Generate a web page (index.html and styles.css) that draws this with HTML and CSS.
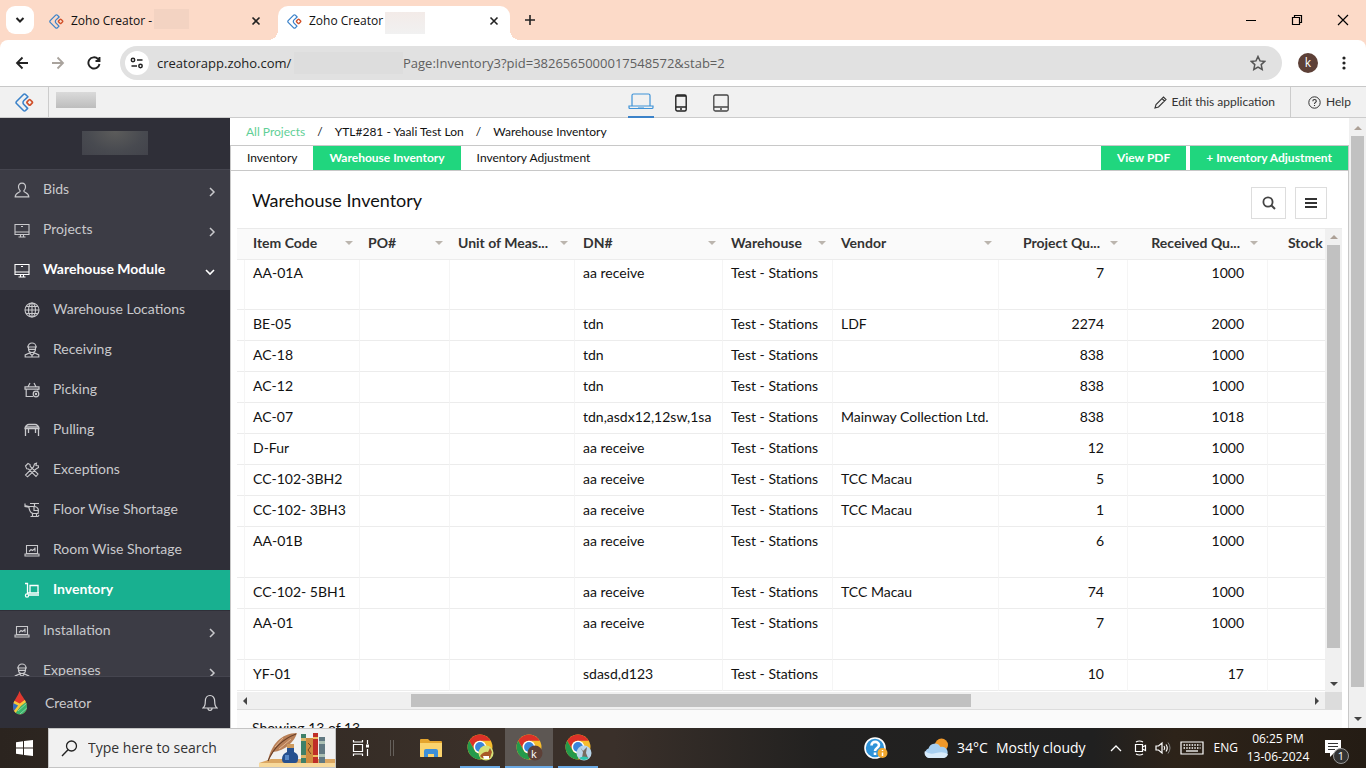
FILE: index.html
```html
<!DOCTYPE html>
<html lang="en">
<head>
<meta charset="utf-8">
<title>Zoho Creator</title>
<link rel="stylesheet" href="styles.css">
</head>
<body>
<svg class="defs" aria-hidden="true">
  <symbol id="zoho" viewBox="0 0 18 18">
    <path d="M12.2 3.6 10 1.4a1.4 1.4 0 0 0-2 0L1.4 8a1.4 1.4 0 0 0 0 2L8 16.600a1.400 1.400 0 0 0 2 0l2-2-3.600-3.700a2.600 2.600 0 0 1 0-3.800z" fill="none" stroke="#3b82c9" stroke-width="1.500" stroke-linejoin="round"/>
    <rect x="11.800" y="6.800" width="4.200" height="4.200" rx="1" transform="rotate(45 13.900 8.900)" fill="none" stroke="#d1512b" stroke-width="1.600"/>
  </symbol>
  <symbol id="close" viewBox="0 0 10 10"><path d="m1.500 1.500 7 7m0-7-7 7" stroke="#222" stroke-width="1.600"/></symbol>
  <symbol id="right" viewBox="0 0 8 10"><path d="m2 1 4 4-4 4" fill="none" stroke="currentColor" stroke-width="1.500"/></symbol>
  <symbol id="monitor" viewBox="0 0 16 16"><path d="M1 2.500h14v10H1zM1 10h14M7 4.500h2M6.500 12.500v2.500m3-2.500v2.500M4.500 15h7" fill="none" stroke="currentColor" stroke-width="1.100"/></symbol>
  <symbol id="laptop" viewBox="0 0 16 16"><path d="M2.500 3.500h11v8h-11zM1 12h14v2H1zM5 9.500l2-2 1.500 1L11 6.500M11 5.500v4" fill="none" stroke="currentColor" stroke-width="1.100"/></symbol>
  <symbol id="worker" viewBox="0 0 16 16"><path d="M4 5a4 4 0 0 1 8 0M3 5h10M4.500 5v2a3.500 3.500 0 0 0 7 0V5M5 7.300h6M1.200 15v-2L5.500 11 8 13.500 10.500 11l4.300 2v2zM8 13v2M6 9.500v2m4-2v2" fill="none" stroke="currentColor" stroke-width="1.200"/></symbol>
  <symbol id="chrome" viewBox="0 0 26 26">
    <circle cx="13" cy="13" r="12.500" fill="#f7bd2d"/>
    <path d="M2.200 6.700A12.500 12.500 0 0 1 23.800 6.700H13a6.300 6.300 0 0 0-5.500 9.500z" fill="#dc3127"/>
    <path d="M2.200 6.700A12.500 12.500 0 0 0 12.800 25.500l5.400-9.300a6 6 0 0 1-10.700 0z" fill="#249a4b"/>
    <circle cx="13" cy="13" r="6.300" fill="#fff"/><circle cx="13" cy="13" r="4.900" fill="#3a85db"/>
  </symbol>
</svg>

<header class="browser">
  <div class="tabstrip">
    <button class="tab-search" aria-label="Search tabs"><svg width="10" height="8" viewBox="0 0 10 8"><path d="m1.500 2 3.500 3.500L8.500 2" fill="none" stroke="#222" stroke-width="2"/></svg></button>
    <div class="tab">
      <svg class="fav"><use href="#zoho"/></svg><span>Zoho Creator -</span><i class="patch peach"></i>
      <button class="tab-close" aria-label="Close tab"><svg width="10" height="10"><use href="#close"/></svg></button>
    </div>
    <div class="tab active">
      <svg class="fav"><use href="#zoho"/></svg><span>Zoho Creator</span><i class="patch pale"></i>
      <button class="tab-close" aria-label="Close tab"><svg width="10" height="10"><use href="#close"/></svg></button>
    </div>
    <button class="new-tab" aria-label="New tab"><svg width="12" height="12" viewBox="0 0 12 12"><path d="M6 1v10M1 6h10" stroke="#222" stroke-width="1.600"/></svg></button>
    <div class="win">
      <button aria-label="Minimize"><svg width="12" height="12" viewBox="0 0 12 12"><path d="M1 6.500h10" stroke="#000"/></svg></button>
      <button aria-label="Restore"><svg width="12" height="12" viewBox="0 0 12 12"><path d="M1.500 3.500h7v7h-7zM3.500 3V1.500h7v7H9" fill="none" stroke="#000" stroke-width="1.200"/></svg></button>
      <button aria-label="Close"><svg width="12" height="12" viewBox="0 0 12 12"><path d="m1 1 10 10M11 1 1 11" stroke="#000" stroke-width="1.200"/></svg></button>
    </div>
  </div>
  <div class="toolbar">
    <button aria-label="Back"><svg width="14" height="14" viewBox="0 0 14 14"><path d="M13 7H2m5.500-5.500L2 7l5.500 5.500" fill="none" stroke="#222" stroke-width="1.800"/></svg></button>
    <button aria-label="Forward"><svg width="14" height="14" viewBox="0 0 14 14"><path d="M1 7h11M6.500 1.500 12 7l-5.500 5.500" fill="none" stroke="#a9a39d" stroke-width="1.800"/></svg></button>
    <button aria-label="Reload"><svg width="14" height="14" viewBox="0 0 14 14"><path d="M12.500 8A5.600 5.600 0 1 1 11 3l1 1M12.500 1v4h-4" fill="none" stroke="#222" stroke-width="1.900"/></svg></button>
    <div class="omnibox">
      <button class="site" aria-label="Site information"><svg width="14" height="12" viewBox="0 0 14 12"><path d="M7 3h5.500M1.500 9H7" stroke="#222" stroke-width="1.600"/><circle cx="3" cy="3" r="1.700" fill="none" stroke="#222" stroke-width="1.500"/><circle cx="10.500" cy="9" r="1.700" fill="none" stroke="#222" stroke-width="1.500"/></svg></button>
      <input class="host" aria-label="Address host" value="creatorapp.zoho.com/"><i class="patch url"></i><input class="path" aria-label="Address path" value="Page:Inventory3?pid=3826565000017548572&amp;stab=2">
      <button class="star" aria-label="Bookmark"><svg width="16" height="16" viewBox="0 0 16 16"><path d="m8 1.500 2 4.400 4.800.5-3.600 3.200 1 4.800L8 12l-4.200 2.400 1-4.800L1.200 6.400 6 5.900z" fill="none" stroke="#555" stroke-width="1.500"/></svg></button>
    </div>
    <button class="avatar">k</button>
    <button class="dots" aria-label="Menu"><svg width="4" height="14" viewBox="0 0 4 14" fill="#222"><circle cx="2" cy="2" r="1.600"/><circle cx="2" cy="7" r="1.600"/><circle cx="2" cy="12" r="1.600"/></svg></button>
  </div>
</header>

<div class="appbar">
  <a class="applogo" href="#" aria-label="Creator home"><svg width="19" height="19"><use href="#zoho"/></svg></a>
  <i class="patch appname"></i>
  <div class="devices">
    <button class="device on" aria-label="Desktop"><svg width="26" height="17" viewBox="0 0 26 17"><path d="M4 13V2.500Q4 1 5.500 1h15Q22 1 22 2.500V13M1 13h24v1.500q0 1-1 1H2q-1 0-1-1zM10 15h6" fill="none" stroke="#3f93d8" stroke-width="1.200"/></svg></button>
    <button class="device" aria-label="Phone"><svg width="12" height="18" viewBox="0 0 12 18"><rect x=".8" y="1" width="10.400" height="16" rx="1.500" fill="none" stroke="#222" stroke-width="1.400"/><path d="M1 2h10M1 13h10M5 15h2" stroke="#222" stroke-width="1.300"/></svg></button>
    <button class="device" aria-label="Tablet"><svg width="16" height="18" viewBox="0 0 16 18"><rect x=".8" y="1" width="14.400" height="16" rx="1.500" fill="none" stroke="#444" stroke-width="1.300"/><path d="M1 13h14M7 15h2" stroke="#444" stroke-width="1.300"/></svg></button>
  </div>
  <button class="edit"><svg width="13" height="13" viewBox="0 0 13 13"><path d="m1 12 1-3.500L9.500 1 12 3.500 4.500 11zM8 2.500 10.500 5" fill="none" stroke="#333" stroke-width="1.100"/></svg>Edit this application</button>
  <button class="help"><svg width="13" height="13" viewBox="0 0 13 13"><circle cx="6.500" cy="6.500" r="5.700" fill="none" stroke="#333"/><path d="M4.800 5.200c0-2.200 3.500-2.200 3.500 0 0 1.200-1.800 1.300-1.800 2.800m0 1v1" fill="none" stroke="#333" stroke-width="1.100"/></svg>Help</button>
</div>

<div class="app">
  <aside class="side">
    <div class="side-head"><i class="patch brand"></i></div>
    <nav class="nav">
      <a class="item" href="#"><svg class="ic" viewBox="0 0 16 16"><path d="M8 1.200c-2.500 0-3.700 1.800-3.500 4 .1 1.600.8 2.700 1.700 3.600C6.500 10.500 1.200 11 1.200 14.800h13.600c0-3.800-5.300-4.300-5-6 .9-.9 1.600-2 1.700-3.600.2-2.200-1-4-3.500-4z" fill="none" stroke="currentColor" stroke-width="1.200"/></svg>Bids<svg class="chev"><use href="#right"/></svg></a>
      <a class="item" href="#"><svg class="ic"><use href="#monitor"/></svg>Projects<svg class="chev"><use href="#right"/></svg></a>
      <a class="item open" href="#"><svg class="ic"><use href="#monitor"/></svg>Warehouse Module<svg class="down" viewBox="0 0 10 8"><path d="m1 2 4 4 4-4" fill="none" stroke="currentColor" stroke-width="1.600"/></svg></a>
      <div class="sub">
        <a class="item" href="#"><svg class="ic" viewBox="0 0 16 16"><g fill="none" stroke="currentColor" stroke-width="1.100"><circle cx="8" cy="8" r="7"/><ellipse cx="8" cy="8" rx="3.500" ry="7"/><path d="M8 1v14M1 8h14M2.200 4.500h11.600M2.200 11.500h11.600"/></g></svg>Warehouse Locations</a>
        <a class="item" href="#"><svg class="ic"><use href="#worker"/></svg>Receiving</a>
        <a class="item" href="#"><svg class="ic" viewBox="0 0 16 16"><g fill="none" stroke="currentColor" stroke-width="1.200"><path d="M1 4.800h14v2.400H1zM2.200 7.200v7.300h7M13.800 7.200v1.300M4 4.800 6 1m6 3.800L10 1"/><circle cx="12" cy="12" r="2.800"/><circle cx="12" cy="12" r=".6"/></g></svg>Picking</a>
        <a class="item" href="#"><svg class="ic" viewBox="0 0 16 16"><path d="M1 6.500c0-2 2-4 4-4h6c2 0 4 2 4 4zM1 4.800h14M1.500 6.500V14M14.500 6.500V14M4.500 6.500V11M11.500 6.500V11" fill="none" stroke="currentColor" stroke-width="1.300"/></svg>Pulling</a>
        <a class="item" href="#"><svg class="ic" viewBox="0 0 16 16"><g fill="none" stroke="currentColor" stroke-width="1.100"><path d="M1.500 4 4 1.500l2 1 .3 2 7.700 7.500-2 2.500L4.500 7l-1.800-.2zM14.500 5.500 12 7l-8.500 7.800L1.500 13 9.500 5 10.500 2l2-.8-.5 2.300 2.300.3z"/></g></svg>Exceptions</a>
        <a class="item" href="#"><svg class="ic" viewBox="0 0 16 16"><path d="M1 1.500v3l4 .7c.3 4 2 6 4.500 6.300h4.500q1.500-6-3-7H5L1 3.500M6 1.500h9M10.500 1.500V4M10 5v3.500h4.500M8.500 11.500v2.500m4-2.500v2.500M6.500 14.500H14l1-1.500" fill="none" stroke="currentColor" stroke-width="1.200"/></svg>Floor Wise Shortage</a>
        <a class="item" href="#"><svg class="ic"><use href="#laptop"/></svg>Room Wise Shortage</a>
        <a class="item current" href="#"><svg class="ic" viewBox="0 0 16 16"><path d="M1 1.500h2.500V12M6 3.500h8v7.500H6zM5 13h10M4 11h11" fill="none" stroke="currentColor" stroke-width="1.300"/><circle cx="3" cy="13.500" r="1.600" fill="none" stroke="currentColor" stroke-width="1.200"/></svg>Inventory</a>
      </div>
      <a class="item" href="#"><svg class="ic"><use href="#laptop"/></svg>Installation<svg class="chev"><use href="#right"/></svg></a>
      <a class="item" href="#"><svg class="ic"><use href="#worker"/></svg>Expenses<svg class="chev"><use href="#right"/></svg></a>
    </nav>
    <div class="side-foot">
      <svg width="16" height="24" viewBox="0 0 16 24"><defs><clipPath id="drop"><path d="M7.500 0C9.500 6 15 9 15 16a7 7.500 0 0 1-14 0C1 9 6 6 7.500 0z"/></clipPath></defs><g clip-path="url(#drop)"><path d="M0 0h16v24H0z" fill="#e0392f"/><path d="M0 9l8 5-8 8z" fill="#2f6fc0"/><path d="M16 9v15H0v-2z" fill="#39b36b"/><path d="m0 10 8 4 8-6M8 14l-6 8" fill="none" stroke="#f7c93b" stroke-width="2.500"/><path d="m6 20 9-8M8 23l8-7" stroke="#9be0b0" stroke-width=".8"/></g></svg>
      <span>Creator</span>
      <button class="bell" aria-label="Notifications"><svg width="16" height="18" viewBox="0 0 16 18"><path d="M1 14c2-1.500 2.300-3 2.300-6.500C3.300 4 5 1.500 8 1.500S12.700 4 12.700 7.500C12.700 11 13 12.500 15 14zM6 14.500c0 2.500 4 2.500 4 0" fill="none" stroke="#d5d5d8" stroke-width="1.200"/></svg></button>
    </div>
  </aside>

  <main class="page">
    <nav class="crumbs"><a href="#">All Projects</a><i>/</i><span>YTL#281 - Yaali Test Lon</span><i>/</i><span>Warehouse Inventory</span></nav>
    <div class="panel">
      <div class="tabs">
        <button>Inventory</button><button class="sel">Warehouse Inventory</button><button>Inventory Adjustment</button>
        <div class="actions"><button class="sel">View PDF</button><button class="sel">+ Inventory Adjustment</button></div>
      </div>
      <section class="report">
        <div class="report-head">
          <h1>Warehouse Inventory</h1>
          <button class="search-btn" aria-label="Search"><svg width="14" height="14" viewBox="0 0 14 14"><circle cx="6" cy="6" r="4.600" fill="none" stroke="#444" stroke-width="1.800"/><path d="m9 9 4 4" stroke="#444" stroke-width="2"/></svg></button>
          <button aria-label="Options"><svg width="12" height="12" viewBox="0 0 12 12"><path d="M0 2h12M0 6h12M0 10h12" stroke="#333" stroke-width="2"/></svg></button>
        </div>
        <div class="grid">
          <div class="scroll">
            <table>
              <colgroup><col class="c0"><col class="c1"><col class="c2"><col class="c3"><col class="c4"><col class="c5"><col class="c6"><col class="c7"><col class="c8"><col class="c9"></colgroup>
              <thead><tr><th></th><th><div>Item Code</div></th><th><div>PO#</div></th><th><div>Unit of Meas...</div></th><th><div>DN#</div></th><th><div>Warehouse</div></th><th><div>Vendor</div></th><th class="n"><div>Project Qu...</div></th><th class="n"><div>Received Qu...</div></th><th class="stock">Stock</th></tr></thead>
              <tbody>
                <tr class="tall"><td></td><td>AA-01A</td><td></td><td></td><td>aa receive</td><td>Test - Stations</td><td></td><td class="n">7</td><td class="n">1000</td><td></td></tr>
                <tr><td></td><td>BE-05</td><td></td><td></td><td>tdn</td><td>Test - Stations</td><td>LDF</td><td class="n">2274</td><td class="n">2000</td><td></td></tr>
                <tr><td></td><td>AC-18</td><td></td><td></td><td>tdn</td><td>Test - Stations</td><td></td><td class="n">838</td><td class="n">1000</td><td></td></tr>
                <tr><td></td><td>AC-12</td><td></td><td></td><td>tdn</td><td>Test - Stations</td><td></td><td class="n">838</td><td class="n">1000</td><td></td></tr>
                <tr><td></td><td>AC-07</td><td></td><td></td><td>tdn,asdx12,12sw,1sa</td><td>Test - Stations</td><td>Mainway Collection Ltd.</td><td class="n">838</td><td class="n">1018</td><td></td></tr>
                <tr><td></td><td>D-Fur</td><td></td><td></td><td>aa receive</td><td>Test - Stations</td><td></td><td class="n">12</td><td class="n">1000</td><td></td></tr>
                <tr><td></td><td>CC-102-3BH2</td><td></td><td></td><td>aa receive</td><td>Test - Stations</td><td>TCC Macau</td><td class="n">5</td><td class="n">1000</td><td></td></tr>
                <tr><td></td><td>CC-102- 3BH3</td><td></td><td></td><td>aa receive</td><td>Test - Stations</td><td>TCC Macau</td><td class="n">1</td><td class="n">1000</td><td></td></tr>
                <tr class="tall"><td></td><td>AA-01B</td><td></td><td></td><td>aa receive</td><td>Test - Stations</td><td></td><td class="n">6</td><td class="n">1000</td><td></td></tr>
                <tr><td></td><td>CC-102- 5BH1</td><td></td><td></td><td>aa receive</td><td>Test - Stations</td><td>TCC Macau</td><td class="n">74</td><td class="n">1000</td><td></td></tr>
                <tr class="tall"><td></td><td>AA-01</td><td></td><td></td><td>aa receive</td><td>Test - Stations</td><td></td><td class="n">7</td><td class="n">1000</td><td></td></tr>
                <tr><td></td><td>YF-01</td><td></td><td></td><td>sdasd,d123</td><td>Test - Stations</td><td></td><td class="n">10</td><td class="n">17</td><td></td></tr>
              </tbody>
            </table>
          </div>
          <div class="vbar"><i class="up"></i><i class="thumb"></i><i class="dn"></i></div>
          <div class="hbar"><i class="lf"></i><i class="track"><i class="thumb"></i></i><i class="rt"></i></div>
          <div class="corner"></div>
        </div>
        <div class="report-foot">Showing 13 of 13</div>
      </section>
    </div>
  </main>
  <div class="vbar page-bar"><i class="up"></i><i class="thumb"></i><i class="dn"></i></div>
</div>

<footer class="taskbar">
  <button class="start" aria-label="Start"><svg width="17" height="16" viewBox="0 0 17 16" fill="#fff"><path d="M0 2.300 7 1.300v6.300H0zM8 1.100 17 0v7.600H8zM0 8.500h7v6.300l-7-1zM8 8.500h9V16l-9-1.100z"/></svg></button>
  <div class="find">
    <svg width="17" height="17" viewBox="0 0 17 17"><circle cx="10.500" cy="6" r="5" fill="none" stroke="#222" stroke-width="1.300"/><path d="M7 9.700 1 16" stroke="#222" stroke-width="1.400"/></svg>
    <input placeholder="Type here to search" aria-label="Type here to search">
    <svg class="art" width="76" height="38" viewBox="0 0 76 38">
      <path d="M0 34l12-4h64v8H0z" fill="#dba763"/><path d="M0 34h76v4H0z" fill="#f7d99b"/>
      <path d="M9 32C12 16 22 4 38 4c-2 8-12 18-24 19" fill="#b98058"/><path d="M9 32C14 20 24 10 37 5" fill="none" stroke="#6b4029" stroke-width="1.200"/><path d="m16 18 8-9m-4 11 12-10" stroke="#e2b48f" stroke-width="1"/>
      <path d="M28 17h7v6q5 2 4 7 0 4-3 4h-10q-3 0-3-4 0-5 5-7z" fill="#26508f"/><path d="M28 15h7v4h-7z" fill="#cf9a5c"/><path d="M26 26h4v5h-4z" fill="#5687c7"/>
      <path d="M42 5h5v29h-5z" fill="#3f8068"/><path d="M42 9h5v3h-5zm0 17h5v3h-5z" fill="#d9b569"/><path d="M47 9h7v25h-7z" fill="#d08b3f"/><path d="m49 14 3 3-3 4 3 4" fill="none" stroke="#7c451e"/><path d="M54 4h5v30h-5z" fill="#bf2e27"/><path d="M54 8h5v2h-5zm0 18h5v2h-5z" fill="#efbc62"/><path d="M60 8h6v26h-6z" fill="#617982"/><path d="M60 12h6v3h-6zm0 13h6v3h-6z" fill="#abc0b4"/>
    </svg>
  </div>
  <button class="tb view" aria-label="Task view"><svg width="17" height="16" viewBox="0 0 17 16"><path d="M1.500 4.500h9v7h-9zM1.500 0v2h9V0M1.500 16v-2h9v2M15.500 0v4M15.500 9v7" fill="none" stroke="#fff" stroke-width="1.200"/><path d="M14 4.500h3v3h-3z" fill="#fff"/></svg></button>
  <i class="sep"></i>
  <button class="tb files" aria-label="Files"><svg width="22" height="19" viewBox="0 0 22 19"><path d="M0 1q0-1 1-1h7l2 2h11q1 0 1 1v15H0z" fill="#e5a52e"/><path d="M0 4h22v13q0 1-1 1H1q-1 0-1-1z" fill="#fbd46e"/><path d="M4 18v-6q0-2 2-2h10q2 0 2 2v6h-4v-3H8v3z" fill="#3d8fd8"/></svg></button>
  <button class="tb run" aria-label="Chrome, first profile"><svg width="28" height="28" viewBox="0 0 28 28"><use href="#chrome" width="26" height="26"/><circle cx="19" cy="19" r="7.500" fill="#d6e178"/><path d="M13 22q4-5 8-4l2-4 2 4-2 6h-8z" fill="#a85a28"/><path d="M16 22h6v3h-5z" fill="#fff"/></svg></button>
  <button class="tb run focus" aria-label="Chrome, profile k"><svg width="28" height="28" viewBox="0 0 28 28"><use href="#chrome" width="26" height="26"/><circle cx="19" cy="19" r="7.500" fill="#5d4037"/></svg><span class="k">k</span></button>
  <button class="tb run" aria-label="Chrome, third profile"><svg width="28" height="28" viewBox="0 0 28 28"><use href="#chrome" width="26" height="26"/><circle cx="19" cy="19" r="7.500" fill="#b9d5ea"/><path d="m15 13 3 4 4-4-1 6 2 5h-6l1-6z" fill="#776b60"/><path d="M14 24q5-3 10 0-5 4-10 0z" fill="#2cc6ae"/></svg></button>
  <div class="tray">
    <button class="tip" aria-label="Tips"><svg width="24" height="22" viewBox="0 0 24 22"><circle cx="11" cy="11" r="10" fill="#2f93d8" stroke="#fff" stroke-width="1.600"/><path d="M7.500 8.500c0-5 7.500-4.500 7.500-.5 0 3-4 3-4 6m0 1.500V18" fill="none" stroke="#fff" stroke-width="2.600"/><circle cx="18.500" cy="16" r="5" fill="#f3a92f"/><path d="M18.500 13v1m0 1.500V19" stroke="#fff" stroke-width="1.500"/></svg></button>
    <button class="weather"><svg width="25" height="21" viewBox="0 0 25 21"><circle cx="17.500" cy="7" r="6.500" fill="#f0992a"/><path d="M5 20a5 5 0 0 1-.5-9.500A6.500 6.500 0 0 1 16.500 9a5.600 5.600 0 1 1 3 11z" fill="#a7cff1"/><path d="M5 20a5 5 0 0 1-4-7q4 4 11 2t12 1q-1 4-5 4z" fill="#d8ebfb"/></svg><span>34°C</span><span>Mostly cloudy</span></button>
    <button class="up-tray" aria-label="Hidden icons"><svg width="12" height="8" viewBox="0 0 12 8"><path d="m1 7 5-5 5 5" fill="none" stroke="#fff" stroke-width="1.300"/></svg></button>
    <button class="meet" aria-label="Meet now"><svg width="13" height="16" viewBox="0 0 13 16"><path d="M1.500 4.500h7v7h-7zM8.500 7l3-1.500v5L8.500 9M2 2q3.500-2 7 0M2 14q3.500 2 7 0" fill="none" stroke="#fff" stroke-width="1.200"/></svg></button>
    <button class="volume" aria-label="Volume"><svg width="17" height="14" viewBox="0 0 17 14"><path d="M1 5h2.500L7 2v10L3.500 9H1zM9 5q1.500 2 0 4M11 3.500q2.500 3.500 0 7" fill="none" stroke="#fff" stroke-width="1.200"/><path d="M13 1.500q4 5.500 0 11" fill="none" stroke="#888"/></svg></button>
    <button aria-label="Keyboard"><svg width="24" height="14" viewBox="0 0 24 14"><path d="M1 1h22v12H1z" fill="none" stroke="#fff" stroke-width="1.200"/><path d="M3.500 4h17M3.500 7h17" stroke="#fff" stroke-width="1.300" stroke-dasharray="1.500 1.200"/><path d="M6 10h12" stroke="#fff" stroke-width="1.300"/></svg></button>
    <button class="lang">ENG</button>
    <button class="clock"><span>06:25 PM</span><span>13-06-2024</span></button>
    <button class="note" aria-label="Notifications"><svg width="17" height="17" viewBox="0 0 17 17"><path d="M0 0h16v13H9l-4 4v-4H0z" fill="#fff"/><path d="M3 3.500h10M3 6.500h10M3 9.500h7" stroke="#333"/></svg><span class="badge">1</span></button>
  </div>
</footer>
</body>
</html>
```
FILE: styles.css
```css
* { box-sizing: border-box; }
body { margin: 0; height: 100vh; display: flex; flex-direction: column; overflow: hidden; font: 12px/16px Lato, sans-serif; color: #111; background: #fff; }
button { font: inherit; color: inherit; border: 0; background: none; padding: 0; display: flex; align-items: center; justify-content: center; }
input { font: inherit; color: inherit; border: 0; background: none; padding: 0; outline: 0; min-width: 0; }
a { color: inherit; text-decoration: none; }
i { font-style: normal; }
svg { flex: none; display: block; }
.defs { position: absolute; width: 0; height: 0; }
.patch { flex: none; display: block; }

/* Browser window */
.browser { flex: none; font: 12px/16px "Open Sans", sans-serif; background: #fcdac8; }
.tabstrip { display: flex; height: 40px; padding-left: 6px; align-items: flex-end; }
.tab-search { width: 28px; height: 28px; margin-bottom: 6px; border-radius: 9px; background: #fff; }
.tab { display: flex; align-items: center; width: 232px; height: 34px; padding: 0 8px 4px 9px; margin-left: 6px; }
.tab.active { background: #fff; border-radius: 10px 10px 0 0; position: relative; }
.tab.active::before, .tab.active::after { content: ""; position: absolute; bottom: 0; width: 10px; height: 10px; }
.tab.active::before { right: 100%; background: radial-gradient(circle at 0 0, #fcdac8 10px, #fff 10px); }
.tab.active::after { left: 100%; background: radial-gradient(circle at 100% 0, #fcdac8 10px, #fff 10px); }
.fav { width: 15px; height: 15px; margin-right: 7px; }
.peach { width: 35px; height: 20px; margin: 0 0 4px 2px; background: #f3d3c2; }
.pale { width: 40px; height: 22px; margin: 4px 0 0 2px; background: linear-gradient(#f3ebe8, #f1f1f1); }
.tab-close { width: 16px; height: 16px; margin-left: auto; }
.new-tab { width: 28px; height: 28px; margin: 0 0 6px 6px; }
.win { margin-left: auto; display: flex; height: 40px; }
.win button { width: 46px; height: 40px; }
.toolbar { display: flex; align-items: center; height: 47px; padding: 0 14px 0 4px; background: #fff; border-bottom: 1px solid #c8c8c8; border-radius: 8px 8px 0 0; }
.toolbar > button { width: 36px; height: 36px; }
.omnibox { flex: 1; display: flex; align-items: center; height: 34px; margin-left: 8px; padding: 0 14px 0 5px; border-radius: 17px; background: #e1e1e1; font-size: 13px; }
.site { width: 24px; height: 24px; border-radius: 12px; background: #fff; margin-right: 8px; }
.host { width: 137px; color: #222; }
.url { width: 109px; height: 22px; background: #dddddd; }
.path { flex: 1; color: #5f5f5f; }
.star { width: 20px; height: 20px; }
.toolbar > .avatar { width: 20px; height: 20px; margin-left: 16px; border-radius: 10px; background: #5d4037; color: #fff; }
.toolbar > .dots { width: 20px; margin-left: 16px; margin-right: -2px; }

/* Application bar */
.appbar { flex: none; display: flex; align-items: center; height: 31px; background: #f1f1f1; border-bottom: 1px solid #ccc; color: #333; }
.applogo { display: flex; align-items: center; justify-content: center; width: 49px; height: 30px; border-right: 1px solid #ccc; }
.appname { width: 40px; height: 16px; margin: 0 0 4px 7px; background: linear-gradient(#dadada, #bdbdbd); }
.devices { flex: 1; display: flex; justify-content: center; gap: 14px; padding-left: 112px; height: 31px; align-self: flex-start; }
.device { width: 26px; }
.device.on { border-bottom: 2px solid #3b82c9; }
.edit { gap: 5px; padding-right: 15px; }
.help { gap: 5px; width: 76px; height: 30px; border-left: 1px solid #ccc; padding-left: 2px; }

/* Side navigation */
.app { flex: 1; display: flex; min-height: 0; }
.side { flex: none; width: 230px; display: flex; flex-direction: column; background: #2f2f38; color: #c9c9cc; font-size: 14px; }
.side-head { flex: none; height: 52px; display: flex; justify-content: center; padding-top: 13px; border-bottom: 1px solid #45454f; }
.brand { width: 66px; height: 24px; background: radial-gradient(ellipse at top, #5c5c5b, #484a50 60%, #42434b); }
.nav { flex: 1; min-height: 0; overflow: hidden; background: #3c3c45; }
.item { display: flex; align-items: center; height: 40px; padding: 0 14px 2px; }
.ic { width: 16px; height: 16px; margin: 2px 13px 0 0; }
.chev { width: 8px; height: 10px; margin: 5px 0 0 auto; }
.down { width: 10px; height: 8px; margin: 5px 1px 0 auto; }
.item.open, .item.current { color: #fff; font-weight: 700; }
.sub { background: #2f2f38; padding-bottom: 1px; }
.sub .item { padding-left: 24px; }
.sub .current { background: #18b090; }
.side-foot { flex: none; display: flex; align-items: center; height: 52px; padding: 0 12px; border-top: 1px solid #45454f; }
.side-foot span { margin-left: 17px; }
.bell { margin-left: auto; }

/* Page */
.page { flex: 1; min-width: 0; display: flex; flex-direction: column; overflow: hidden; }
.crumbs { flex: none; display: flex; gap: 12px; height: 27px; padding: 0 16px; align-items: center; }
.crumbs a { color: #5fcf97; }
.panel { flex: 1; border: 1px solid #c8c8c8; border-bottom: 0; }
.tabs { display: flex; height: 25px; border-bottom: 1px solid #c8c8c8; }
.tabs button { padding: 0 16px; }
.tabs .sel { background: #20d67e; color: #fff; font-weight: 700; }
.actions { display: flex; gap: 4px; margin-left: auto; }
.report { padding: 0 6px; }
.report-head { display: flex; align-items: center; gap: 9px; height: 57px; padding: 7px 15px 0; }
.report-head h1 { flex: 1; margin: 0 0 6px; font: 400 18px/24px Lato, sans-serif; }
.report-head button { width: 32px; height: 32px; border: 1px solid #ddd; }
.report-head .search-btn { width: 35px; }
.grid { display: grid; grid-template-columns: minmax(0, 1fr) 17px; border-top: 1px solid #eaeaea; border-bottom: 1px solid #ddd; }
.scroll { overflow: hidden; padding-bottom: 1px; }
table { table-layout: fixed; width: 1230px; border-collapse: separate; border-spacing: 0; font-size: 14px; line-height: 18px; }
.c0 { width: 8px; } .c1 { width: 115px; } .c2 { width: 90px; } .c3 { width: 125px; } .c4 { width: 148px; }
.c5 { width: 110px; } .c6 { width: 166px; } .c7 { width: 129px; } .c8 { width: 140px; } .c9 { width: 199px; }
th, td { padding: 0 8px; text-align: left; border-bottom: 1px solid #ececec; white-space: nowrap; }
th { height: 31px; padding-bottom: 2px; background: #fafafa; font-weight: 700; color: #333; }
th div { display: flex; align-items: center; justify-content: space-between; margin-right: -1px; }
th div::after { content: ""; border: 4px solid transparent; border-top: 4px solid #bbb5ae; border-bottom: 0; }
th.n div { justify-content: flex-end; gap: 10px; margin-right: 2px; }
th.stock { padding-left: 20px; }
td { height: 31px; vertical-align: top; padding-top: 5px; border-right: 1px solid #f5f5f5; }
.tall td { height: 51px; }
tbody tr:first-child td { height: 50px; padding-top: 4px; }
td.n { text-align: right; padding-right: 23px; }
.vbar { display: flex; flex-direction: column; align-items: center; background: #f0f0f0; padding: 6px 2px; }
.vbar .thumb { width: 13px; background: #c1c1c1; }
.grid .vbar .thumb { flex: 1; margin: 6px 0 34px; }
.up, .dn, .lf, .rt { flex: none; border: 4px solid transparent; }
.up { border-top: 0; border-bottom-color: #aca096; }
.dn { border-bottom: 0; border-top-color: #444; }
.lf { border-left: 0; border-right-color: #444; }
.rt { border-right: 0; border-left-color: #444; }
.hbar { display: flex; align-items: center; height: 17px; padding: 0 6px; background: #f0f0f0; }
.hbar .track { flex: 1; margin: 0 6px; }
.hbar .thumb { display: block; width: 53%; height: 13px; margin-left: 15%; background: #c1c1c1; }
.corner { background: #dcdcdc; }
.report-foot { height: 36px; padding: 9px 15px; background: #fafafa; font-size: 14px; line-height: 18px; }
.page-bar { flex: none; width: 17px; padding: 8px 2px 7px; }
.page-bar .thumb { flex: 1; margin: 6px 0 30px; }

/* Taskbar */
.taskbar { flex: none; display: flex; height: 40px; color: #fff; background: linear-gradient(90deg, #2b241f, #3a3029 35%, #3a302a 45%, #222120 60%, #202020 80%, #2d2319 86%, #241c14); font: 13px/18px "Open Sans", sans-serif; }
.start { width: 48px; }
.find { display: flex; align-items: center; width: 288px; padding-left: 12px; background: #f1f1f1; border: 1px solid #c4c4c4; color: #333; }
.find input { flex: 1; margin-left: 10px; font-size: 14px; }
.find input::placeholder { color: #333; opacity: 1; }
.art { align-self: flex-end; }
.tb { width: 48px; }
.sep { width: 4px; height: 16px; margin: 12px 14px 0 6px; border: 1px solid #65605b; border-width: 0 1px; }
.files { padding-right: 2px; }
.run { border-bottom: 2px solid #6aa9e4; width: 40px; margin: 0 4px; position: relative; }
.run svg { margin: 2px 0 0 2px; }
.run.focus { width: 48px; margin: 0 1px; background: #5d5753; }
.k { position: absolute; left: 26px; top: 17px; font-size: 11px; }
.tray { margin-left: auto; display: flex; align-items: center; }
.tip { margin-right: 36px; }
.weather { gap: 8px; font-size: 14px; margin-right: 24px; }
.up-tray { margin-right: 12px; }
.meet { margin-right: 8px; }
.volume { margin-right: 8px; }
.lang { margin-left: 10px; font-size: 12px; }
.clock { flex-direction: column; width: 80px; font-size: 12px; line-height: 18px; }
.note { position: relative; margin: 0 24px 0 7px; }
.badge { position: absolute; left: 8px; top: 8px; width: 16px; height: 16px; border: 1px solid #999; border-radius: 8px; background: #333; font-size: 11px; line-height: 14px; text-align: center; }
```
